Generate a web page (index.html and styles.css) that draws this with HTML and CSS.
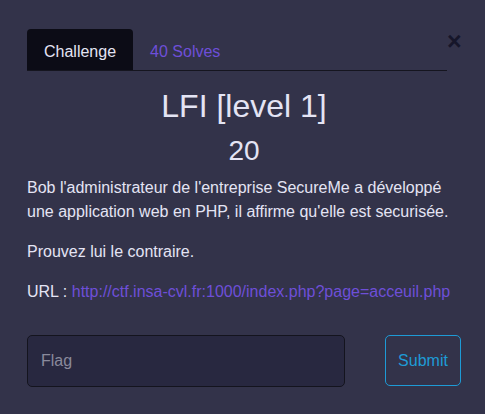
FILE: index.html
```
<!DOCTYPE html>
<html>
<head>
<meta charset="utf-8">
<link rel="stylesheet" href="styles.css">
</head>
<body>
<div class="modal">
  <button class="close">&times;</button>
  <div class="body">
    <nav class="tabs">
      <a class="tab active">Challenge</a>
      <a class="tab">40 Solves</a>
    </nav>
    <h3 class="title">LFI [level 1]</h3>
    <h4 class="value">20</h4>
    <div class="desc">
      <p>Bob l'administrateur de l'entreprise SecureMe a développé une application web en PHP, il affirme qu'elle est securisée.</p>
      <p>Prouvez lui le contraire.</p>
      <p>URL : <a class="link">http://ctf.insa-cvl.fr:1000/index.php?page=acceuil.php</a></p>
    </div>
    <form class="submit-row">
      <input class="flag" type="text" placeholder="Flag">
      <button class="submit" type="button">Submit</button>
    </form>
  </div>
</div>
</body>
</html>
```
FILE: styles.css
```
html, body {
  margin: 0;
  padding: 0;
  background: #33334a;
  width: 485px;
  height: 414px;
  overflow: hidden;
}
.modal {
  position: relative;
  font-family: "Liberation Sans", Arial, sans-serif;
  color: #e4e4f4;
}
.close {
  position: absolute;
  top: 30px;
  left: 447px;
  background: none;
  border: none;
  padding: 0;
  font-family: "Liberation Sans", Arial, sans-serif;
  font-size: 25px;
  font-weight: 700;
  line-height: 22px;
  color: #16162a;
}
.body {
  padding: 29px 24px 0 27px;
}
.tabs {
  display: flex;
  margin-right: 14px;
  border-bottom: 1px solid #15151f;
}
.tab {
  display: block;
  padding: 2px 17px 0;
  height: 39px;
  line-height: 41px;
  font-size: 16px;
  color: #6e4fd8;
  border-radius: 4px 4px 0 0;
}
.tab.active {
  background: #0c0c16;
  color: #e4e4f4;
}
.title {
  margin: 15px 0 0;
  text-align: center;
  font-size: 32px;
  font-weight: 400;
  line-height: 40px;
}
.value {
  margin: 8px 0 0;
  text-align: center;
  font-size: 28px;
  font-weight: 400;
  line-height: 34px;
}
.desc {
  margin-top: 8px;
  font-size: 16px;
  line-height: 24px;
}
.desc p {
  margin: 0 0 16px;
}
.link {
  color: #6e4fd8;
}
.submit-row {
  display: flex;
  gap: 40px;
  margin-top: 31px;
}
.flag {
  box-sizing: border-box;
  width: 318px;
  height: 52px;
  border: 1px solid #14141e;
  border-radius: 5px;
  background: #282840;
  padding: 0 13px;
  font-family: "Liberation Sans", Arial, sans-serif;
  font-size: 16px;
  color: #e4e4f4;
}
.flag::placeholder {
  color: #8a8a9c;
}
.submit {
  box-sizing: border-box;
  width: 76px;
  height: 51px;
  border: 1px solid #1e9bd6;
  border-radius: 5px;
  background: transparent;
  font-family: "Liberation Sans", Arial, sans-serif;
  font-size: 16px;
  color: #1e9bd6;
  padding: 0;
}
```
